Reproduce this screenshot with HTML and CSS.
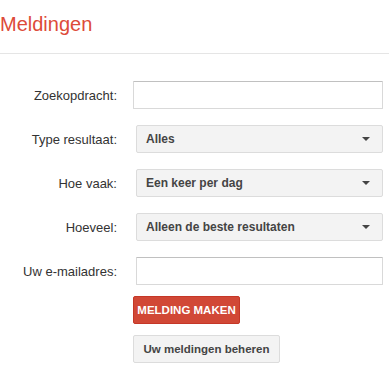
FILE: index.html
```html
<!DOCTYPE html>
<html>
<head>
    <title>Meldingen</title>
    <link rel="stylesheet" href="styles.css">
</head>
<body>
<div class="header">
    <h1>Meldingen</h1>
</div>

<form class="alert-form">
    <label for="query">Zoekopdracht:</label>
    <input type="text" id="query" class="text-field">

    <label>Type resultaat:</label>
    <div class="select"><span>Alles</span><i class="arrow"></i></div>

    <label>Hoe vaak:</label>
    <div class="select"><span>Een keer per dag</span><i class="arrow"></i></div>

    <label>Hoeveel:</label>
    <div class="select"><span>Alleen de beste resultaten</span><i class="arrow"></i></div>

    <label for="email">Uw e-mailadres:</label>
    <input type="text" id="email" class="text-field email">

    <div class="actions">
        <button type="button" class="btn btn-red">MELDING MAKEN</button>
        <button type="button" class="btn btn-grey">Uw meldingen beheren</button>
    </div>
</form>
</body>
</html>
```

FILE: styles.css
```css
body {
    margin: 0;
    background-color: #fff;
    font-family: Arial, "Liberation Sans", sans-serif;
    color: #222;
}
.header {
    height: 53px;
    border-bottom: 1px solid #e5e5e5;
}
h1 {
    margin: 0;
    padding-top: 12px;
    font-size: 20px;
    font-weight: normal;
    line-height: 24px;
    color: #dd4b39;
}
.alert-form {
    display: grid;
    grid-template-columns: 117px 250px;
    column-gap: 16px;
    row-gap: 16px;
    padding-top: 27px;
    align-items: center;
}
.alert-form label {
    text-align: right;
    font-size: 13px;
    color: #333;
}
.text-field {
    box-sizing: border-box;
    height: 28px;
    width: 250px;
    margin: 0;
    padding: 0 8px;
    border: 1px solid #d9d9d9;
    border-top-color: #c0c0c0;
    border-radius: 1px;
}
.text-field.email {
    margin-left: 3px;
    width: 247px;
}
.select {
    box-sizing: border-box;
    height: 28px;
    margin-left: 3px;
    padding: 0 12px 0 9px;
    display: flex;
    align-items: center;
    justify-content: space-between;
    background-color: #f3f3f3;
    border: 1px solid #dcdcdc;
    border-radius: 2px;
    font-size: 12px;
    font-weight: bold;
    color: #444;
}
.arrow {
    width: 0;
    height: 0;
    border-left: 4px solid transparent;
    border-right: 4px solid transparent;
    border-top: 4px solid #444;
}
.actions {
    grid-column: 2;
    display: flex;
    flex-direction: column;
    align-items: flex-start;
    gap: 11px;
    margin-top: -5px;
}
.btn {
    box-sizing: border-box;
    height: 28px;
    padding: 0;
    border-radius: 2px;
    font-family: Arial, "Liberation Sans", sans-serif;
    font-size: 11.5px;
    font-weight: bold;
    white-space: nowrap;
    cursor: pointer;
}
.btn-red {
    width: 107px;
    background-color: #d14836;
    border: 1px solid #c53727;
    color: #fff;
}
.btn-grey {
    width: 147px;
    background-color: #f3f3f3;
    border: 1px solid #dcdcdc;
    color: #444;
}
```
